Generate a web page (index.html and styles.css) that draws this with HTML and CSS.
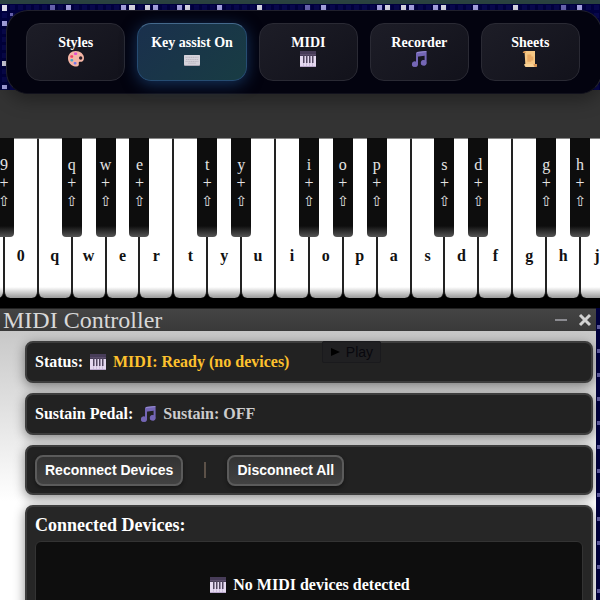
FILE: index.html
```
<!DOCTYPE html>
<html lang="en">
  <head>
    <meta charset="utf-8">
    <title>Piano</title>
    <link rel="stylesheet" href="styles.css">
  </head>
  <body>
    <!-- shared icons -->
    <svg class="defs" width="0" height="0" aria-hidden="true">
      <symbol id="piano" viewBox="0 0 16 16">
        <path fill="#e5d9f0" d="M0 4h16v12H0z"/>
        <path fill="#473c58" d="M0 0h16v5H0z"/>
        <path fill="#5b4d6b" d="M0 3h16v1H0z"/>
        <path fill="#51465f" d="M3 4h1.500v8H3zM6 4h1.500v8H6zM9 4h1.500v8H9zM12 4h1.500v8H12z"/>
        <path fill="#b9a7cb" d="M3.500 12h.5v3h-.5zM6.500 12h.5v3h-.5zM9.500 12h.5v3h-.5zM12.500 12h.5v3h-.5zM0 15h16v1H0z"/>
      </symbol>
      <symbol id="notes" viewBox="0 0 16 16">
        <path fill="#7466b5" d="M5 2.2Q5 1.3 6 1.1L14.6 0Q15.6 0 15.6 1v10.8a2.9 2.6 0 1 1-2-2.5V4L7 4.9v8.3a3 2.6 0 1 1-2-2.4z"/>
        <path fill="#7466b5" d="M5.500 3.500 15 2.200v2.300L6 5.700z"/>
        <path fill="#9287cd" d="M6 1.1 14.6 0Q15.6 0 15.6 1L6 2.3z"/>
        <circle cx="3.700" cy="13.200" r="2.600" fill="#7466b5"/>
        <circle cx="12.700" cy="11.900" r="2.600" fill="#7466b5"/>
      </symbol>
    </svg>

    <header class="top">
      <svg class="stars" width="100%" height="86" aria-hidden="true">
        <defs>
          <pattern id="cells" width="8" height="8" patternUnits="userSpaceOnUse">
            <rect x="2" y="1" width="5" height="5" fill="#080850"/>
          </pattern>
        </defs>
        <rect width="100%" height="86" fill="#000040"/>
        <rect width="100%" height="86" fill="url(#cells)"/>
        <path fill="#a9a6e6" d="M66 1h5v5h-5zM121 1h5v5h-5zM153 1h5v5h-5zM177 1h5v5h-5zM217 1h5v5h-5zM321 1h5v5h-5zM377 1h5v5h-5zM409 1h5v5h-5zM433 1h5v5h-5zM473 1h5v5h-5zM577 1h5v5h-5zM2 17h5v5H2zM2 81h5v4H2z"/>
        <path fill="#6b66b4" d="M50 1h5v5h-5zM305 1h5v5h-5zM561 1h5v5h-5zM10 9h3v3h-3z"/>
        <path fill="#dddcea" d="M2 1h5v6H2zM129 1h6v5h-6zM145 1h5v5h-5zM185 1h5v5h-5zM257 1h5v5h-5zM385 1h5v5h-5zM401 1h5v5h-5zM441 1h5v5h-5zM513 1h5v5h-5zM2 57h4v5H2z"/>
      </svg>
      <nav class="menu">
        <button class="menubutton" type="button">Styles
          <svg class="icon" viewBox="0 0 16 16" aria-hidden="true">
            <path fill="#f5b5a5" d="M7.6 0C12.4 0 16 3.300 16 6.900c0 2.600-1.700 4-3.700 3.900-1.300-.1-1.800.5-1.500 1.600.3 1.500-.2 3.100-2.100 3.100C3.700 15.500 0 11.800 0 7.400 0 3.100 3.300 0 7.600 0z"/>
            <circle cx="12.700" cy="7" r="1.700" fill="#2a1c26"/>
            <rect x="6" y="1.500" width="3.200" height="2.400" rx="1" fill="#e04fd0"/>
            <rect x="2.200" y="4.200" width="3" height="2.500" rx="1" fill="#f03d68"/>
            <rect x="2.400" y="8" width="2.800" height="2.500" rx="1" fill="#4aa9c9"/>
            <rect x="5.700" y="10.900" width="2.800" height="2.600" rx="1" fill="#7478e8"/>
          </svg>
        </button>
        <button class="menubutton active" type="button">Key assist On
          <svg class="icon" viewBox="0 0 16 16" aria-hidden="true">
            <rect y="4" width="16" height="11" rx="1" fill="#aaa5b2"/>
            <rect y="4" width="16" height="10" rx="1" fill="#d5d2da"/>
            <path stroke="#bdb9c3" stroke-width="1.200" stroke-dasharray="1.300 .5" d="M1.500 6.300h13M2 8.500h12.500M1.500 10.500h13"/>
            <path stroke="#c2bec8" d="M4 12.200h8"/>
          </svg>
        </button>
        <button class="menubutton" type="button">MIDI
          <svg class="icon" aria-hidden="true"><use href="#piano"/></svg>
        </button>
        <button class="menubutton" type="button">Recorder
          <svg class="icon" aria-hidden="true"><use href="#notes"/></svg>
        </button>
        <button class="menubutton" type="button">Sheets
          <svg class="icon" viewBox="0 0 16 16" aria-hidden="true">
            <path fill="#f6c784" d="M2.500 0h10.500v13H15v1.500q0 1.500-1.500 1.500H3.500z"/>
            <path fill="#d99555" d="M2.500 0Q.7.300.7 2h3V1Q3.700 0 2.500 0z"/>
            <path fill="#f9d295" d="M2.200 13h9.300q.2 2 1.700 2.200V16H4q-1.800-.3-1.800-3z"/>
            <path fill="#d99555" d="M11.500 13H15v1.500q0 1.500-1.500 1.500-1.800 0-2-3z"/>
            <path fill="#e8a965" d="M5.300 3.500h4v2h2v4h-2v1.300h-4z"/>
          </svg>
        </button>
      </nav>
    </header>

    <main>
      <div class="piano">
        <div class="keys">
          <div class="key"><div class="blackkey">9<span>+</span><span class="shift">⇧</span></div></div>
          <div class="key">0</div>
          <div class="key">q<div class="blackkey">q<span>+</span><span class="shift">⇧</span></div></div>
          <div class="key">w<div class="blackkey">w<span>+</span><span class="shift">⇧</span></div></div>
          <div class="key">e<div class="blackkey">e<span>+</span><span class="shift">⇧</span></div></div>
          <div class="key">r</div>
          <div class="key">t<div class="blackkey">t<span>+</span><span class="shift">⇧</span></div></div>
          <div class="key">y<div class="blackkey">y<span>+</span><span class="shift">⇧</span></div></div>
          <div class="key">u</div>
          <div class="key">i<div class="blackkey">i<span>+</span><span class="shift">⇧</span></div></div>
          <div class="key">o<div class="blackkey">o<span>+</span><span class="shift">⇧</span></div></div>
          <div class="key">p<div class="blackkey">p<span>+</span><span class="shift">⇧</span></div></div>
          <div class="key">a</div>
          <div class="key">s<div class="blackkey">s<span>+</span><span class="shift">⇧</span></div></div>
          <div class="key">d<div class="blackkey">d<span>+</span><span class="shift">⇧</span></div></div>
          <div class="key">f</div>
          <div class="key">g<div class="blackkey">g<span>+</span><span class="shift">⇧</span></div></div>
          <div class="key">h<div class="blackkey">h<span>+</span><span class="shift">⇧</span></div></div>
          <div class="key">j</div>
        </div>
      </div>

      <section class="window">
        <div class="titlebar">
          <h1 class="title">MIDI Controller</h1>
          <button class="windowbutton" type="button" aria-label="Minimize">
            <svg width="12" height="12" viewBox="0 0 12 12"><path stroke="#8b8b90" stroke-width="2" d="M0 6h12"/></svg>
          </button>
          <button class="windowbutton" type="button" aria-label="Close">
            <svg width="14" height="14" viewBox="0 0 14 14"><path stroke="#d2d2d2" stroke-width="3" d="M2 2l10 10M12 2L2 12"/></svg>
          </button>
        </div>
        <div class="content">
          <button class="play" type="button">
            <svg width="10" height="10" viewBox="0 0 10 10" aria-hidden="true"><path d="M1 1l9 4-9 4z"/></svg>
            Play
          </button>
          <div class="box">
            <span>Status:</span>
            <svg class="icon" aria-hidden="true"><use href="#piano"/></svg>
            <span class="ready">MIDI: Ready (no devices)</span>
          </div>
          <div class="box">
            <span>Sustain Pedal:</span>
            <svg class="icon" aria-hidden="true"><use href="#notes"/></svg>
            <span class="off">Sustain: OFF</span>
          </div>
          <div class="box buttons">
            <button class="button" type="button">Reconnect Devices</button>
            <span class="separator"></span>
            <button class="button" type="button">Disconnect All</button>
          </div>
          <div class="box devices">
            <h2 class="heading">Connected Devices:</h2>
            <div class="devicelist">
              <svg class="icon" aria-hidden="true"><use href="#piano"/></svg>
              <span>No MIDI devices detected</span>
            </div>
          </div>
        </div>
      </section>
    </main>
  </body>
</html>
```
FILE: styles.css
```
* {
  box-sizing: border-box;
}

body {
  margin: 0;
  height: 100vh;
  overflow: hidden;
  display: flex;
  flex-direction: column;
  background: #333;
  font-family: "Liberation Serif", "Times New Roman", serif;
}

main {
  flex: 1;
  min-height: 0;
  overflow: hidden;
}

.defs {
  position: absolute;
}

.icon {
  width: 16px;
  height: 16px;
  flex: none;
}

.top {
  position: relative;
  flex: none;
  border-top: 4px solid #2b4341;
  padding: 6px 0 44px 6px;
}

.stars {
  position: absolute;
  top: 0;
  left: 0;
}

.menu {
  position: relative;
  display: flex;
  justify-content: center;
  gap: 12px;
  margin-right: -2px;
  padding: 12px 14px 12px 12px;
  background: #03030f;
  border: 1px solid #20202c;
  border-bottom-color: #11111c;
  border-radius: 22px;
  box-shadow: 0 6px 18px rgba(0,0,0,0.35);
}

.menubutton {
  display: flex;
  flex-direction: column;
  align-items: center;
  min-width: 99px;
  height: 58px;
  padding: 10px 13px;
  color: #fff;
  background: linear-gradient(145deg, #1d1d27, #12121b);
  border: 1px solid #2a2a34;
  border-radius: 14px;
  font-family: inherit;
  font-size: 14px;
  font-weight: bold;
  line-height: 17px;
}

.menubutton.active {
  background: linear-gradient(135deg, #1a304d, #183c43);
  border-color: #264c72;
  border-top-color: #44698c;
  box-shadow: 0 3px 16px rgba(35,90,155,0.55);
}

.piano {
  position: relative;
  overflow: hidden;
  background: #000;
  padding-bottom: 10px;
}

.keys {
  display: flex;
  margin: 0 -14px 0 -30px;
}

.key {
  position: relative;
  flex: 1;
  height: 160px;
  padding-top: 108px;
  text-align: center;
  font-size: 16px;
  font-weight: bold;
  line-height: 18px;
  color: #111;
  background: linear-gradient(#fff 148px, #999);
  border: 1px solid #222;
  border-top-color: #888;
  border-bottom: 0;
  border-radius: 0 0 6px 6px;
}

/* sits over the gap to the next white key */
.blackkey {
  position: absolute;
  z-index: 1;
  top: -1px;
  right: -11px;
  width: 20px;
  height: 99px;
  padding-top: 18px;
  display: flex;
  flex-direction: column;
  align-items: center;
  color: #e4e4e4;
  font-weight: normal;
  background: linear-gradient(#0d0d0d 88px, #555);
  border-radius: 0 0 4px 4px;
}

.shift {
  font-family: "DejaVu Sans", sans-serif;
  font-size: 14px;
}

.window {
  position: relative;
  background: #00003c;
  padding-right: 4px;
}

.titlebar {
  display: flex;
  align-items: center;
  gap: 11px;
  height: 23px;
  padding: 0 4px 0 3px;
  background: linear-gradient(#444, #393939);
  border-top: 1px solid #222;
}

.title {
  flex: 1;
  margin: 0;
  font-size: 24px;
  font-weight: normal;
  line-height: 22px;
  color: #d8d8d8;
}

.windowbutton {
  display: flex;
  padding: 0;
  border: 0;
  background: none;
}

.content {
  position: relative;
  display: flex;
  flex-direction: column;
  gap: 10px;
  padding: 10px 3px 10px 25px;
  background: linear-gradient(#c8c8c8, #fff 170px);
}

.box {
  display: flex;
  align-items: center;
  gap: 7px;
  min-height: 42px;
  padding: 8px;
  color: #fff;
  font-size: 16px;
  font-weight: bold;
  line-height: 18px;
  background: #222;
  border: 2px solid #3d3d3d;
  border-radius: 8px;
  box-shadow: 0 3px 12px rgba(0,0,0,0.45);
}

.ready {
  color: #fdc12e;
}

.off {
  color: #ccc;
}

.buttons {
  gap: 21px;
  min-height: 50px;
  padding: 7px 8px;
}

.button {
  height: 31px;
  padding: 0 8px;
  color: #fff;
  font-family: "Liberation Sans", Arial, sans-serif;
  font-size: 14px;
  font-weight: bold;
  background: linear-gradient(#333, #424242);
  border: 2px solid #5b5b5b;
  border-radius: 8px;
  box-shadow: 0 2px 4px rgba(0,0,0,0.4);
}

.separator {
  width: 2px;
  height: 16px;
  background: #5c5148;
}

.devices {
  flex-direction: column;
  align-items: stretch;
  gap: 6px;
  background: #262626;
}

.heading {
  margin: 0;
  font-size: 18px;
  line-height: 20px;
}

.devicelist {
  display: flex;
  justify-content: center;
  align-items: center;
  gap: 7px;
  padding: 34px 8px 34px 10px;
  background: #0e0e0e;
  border: 1px solid #333;
  border-radius: 6px;
}

/* recorder button showing through the window */
.play {
  position: absolute;
  z-index: 1;
  top: 10px;
  left: 54%;
  display: flex;
  align-items: center;
  gap: 6px;
  height: 22px;
  padding: 0 7px;
  color: #08080e;
  font-family: "Liberation Sans", Arial, sans-serif;
  font-size: 14px;
  background: #202022;
  border: 1px solid #1a1a1d;
  border-radius: 2px;
}

/* edge of the starry backdrop */
.window::after {
  content: "";
  position: absolute;
  top: 0;
  right: 0;
  bottom: 0;
  width: 3px;
  background: repeating-linear-gradient(#00003c 0 17px, #5b5898 17px 21px, #00003c 21px 24px);
}
```
